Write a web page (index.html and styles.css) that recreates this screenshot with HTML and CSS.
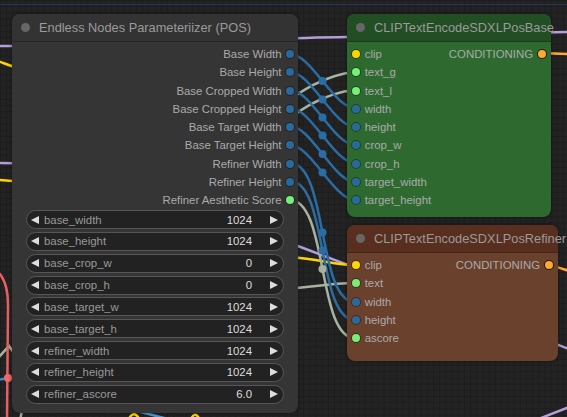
FILE: index.html
```html
<!DOCTYPE html>
<html>
<head>
<meta charset="utf-8">
<link rel="stylesheet" href="styles.css">
</head>
<body>
<div class="canvas">
  <svg class="wires" width="567" height="417" viewBox="0 0 567 417">
    <line x1="0" y1="4.5" x2="567" y2="4.5" stroke="#22345e" stroke-width="1"/>
    <g fill="none" stroke-width="2.5" stroke-linecap="round">
      <path d="M -2 46 C 120 46, 220 39, 347 37 L 569 32" stroke="#b39ddb"/>
      <path d="M -2 163 C 120 163, 180 205, 290 243 L 569 349" stroke="#b39ddb"/>
      <path d="M 536 420 L 569 407" stroke="#b39ddb"/>
      <path d="M -2 61 C 6 64, 12 67, 30 72" stroke="#ffd500"/>
      <path d="M -2 180 C 120 185, 200 252, 290 257 C 320 259, 335 265, 355 265" stroke="#ffd500"/>
      <path d="M 128 421 C 131 413, 136 411, 140 421" stroke="#ffd500"/>
      <path d="M 190 421 C 193 414, 196 412, 200 420" stroke="#ffd500"/>
      <path d="M 541 53 L 569 54" stroke="#ffa931"/>
      <path d="M 548 265 C 555 266, 560 268, 569 271" stroke="#ffa931"/>
      <path d="M 230 140 C 280 110, 310 76, 355 72" stroke="#a6b3a0"/>
      <path d="M 230 160 C 280 128, 310 94, 355 90" stroke="#a6b3a0"/>
      <path d="M 250 292 C 300 289, 330 283, 355 283" stroke="#a6b3a0"/>
      <path d="M -2 358 L 9 346 L 14 353" stroke="#a6b3a0"/>
      <path d="M 22 410 L 20 421" stroke="#a6b3a0"/>
      <path d="M 290 200 C 328 200, 317 338, 355 338" stroke="#a6b3a0"/>
      <path d="M 290 54 C 311 54, 334 108, 355 108" stroke="#2b6ca3"/>
      <path d="M 290 72 C 311 72, 334 127, 355 127" stroke="#2b6ca3"/>
      <path d="M 290 90 C 311 90, 334 145, 355 145" stroke="#2b6ca3"/>
      <path d="M 290 108 C 311 108, 334 163, 355 163" stroke="#2b6ca3"/>
      <path d="M 290 126 C 311 126, 334 182, 355 182" stroke="#2b6ca3"/>
      <path d="M 290 145 C 311 145, 334 200, 355 200" stroke="#2b6ca3"/>
      <path d="M 290 163 C 328 163, 317 302, 355 302" stroke="#2b6ca3"/>
      <path d="M 290 181 C 328 181, 317 320, 355 320" stroke="#2b6ca3"/>
      <path d="M -2 272 C 6 280, 8 292, 8 305 L 7 421" stroke="#e86060"/>
      <path d="M -2 380 L 8 378" stroke="#3b8ad0"/>
      <path d="M 137 411 L 168 419" stroke="#4a9ad8"/>
    </g>
    <g fill="#2b6ca3">
      <circle cx="322.5" cy="81" r="4"/>
      <circle cx="322.5" cy="99.5" r="4"/>
      <circle cx="322.5" cy="117.5" r="4"/>
      <circle cx="322.5" cy="135.5" r="4"/>
      <circle cx="322.5" cy="154" r="4"/>
      <circle cx="322.5" cy="172.5" r="4"/>
      <circle cx="322.5" cy="232.5" r="4"/>
      <circle cx="322.5" cy="250.5" r="4"/>
    </g>
    <circle cx="322.5" cy="269" r="4" fill="#a6b3a0"/>
    <circle cx="8" cy="378" r="4" fill="#f06a6a"/>
  </svg>

  <div class="node node-params">
    <div class="node-header"><span class="node-dot"></span><span class="node-title">Endless Nodes Parameteriizer (POS)</span></div>
    <div class="node-body">
      <div class="slot out"><span class="label">Base Width</span><span class="dot int"></span></div>
      <div class="slot out"><span class="label">Base Height</span><span class="dot int"></span></div>
      <div class="slot out"><span class="label">Base Cropped Width</span><span class="dot int"></span></div>
      <div class="slot out"><span class="label">Base Cropped Height</span><span class="dot int"></span></div>
      <div class="slot out"><span class="label">Base Target Width</span><span class="dot int"></span></div>
      <div class="slot out"><span class="label">Base Target Height</span><span class="dot int"></span></div>
      <div class="slot out"><span class="label">Refiner Width</span><span class="dot int"></span></div>
      <div class="slot out"><span class="label">Refiner Height</span><span class="dot int"></span></div>
      <div class="slot out"><span class="label">Refiner Aesthetic Score</span><span class="dot float"></span></div>
      <div class="widgets">
        <div class="widget"><span class="arrow left"></span><span class="w-label">base_width</span><span class="w-value">1024</span><span class="arrow right"></span></div>
        <div class="widget"><span class="arrow left"></span><span class="w-label">base_height</span><span class="w-value">1024</span><span class="arrow right"></span></div>
        <div class="widget"><span class="arrow left"></span><span class="w-label">base_crop_w</span><span class="w-value">0</span><span class="arrow right"></span></div>
        <div class="widget"><span class="arrow left"></span><span class="w-label">base_crop_h</span><span class="w-value">0</span><span class="arrow right"></span></div>
        <div class="widget"><span class="arrow left"></span><span class="w-label">base_target_w</span><span class="w-value">1024</span><span class="arrow right"></span></div>
        <div class="widget"><span class="arrow left"></span><span class="w-label">base_target_h</span><span class="w-value">1024</span><span class="arrow right"></span></div>
        <div class="widget"><span class="arrow left"></span><span class="w-label">refiner_width</span><span class="w-value">1024</span><span class="arrow right"></span></div>
        <div class="widget"><span class="arrow left"></span><span class="w-label">refiner_height</span><span class="w-value">1024</span><span class="arrow right"></span></div>
        <div class="widget"><span class="arrow left"></span><span class="w-label">refiner_ascore</span><span class="w-value">6.0</span><span class="arrow right"></span></div>
      </div>
    </div>
  </div>

  <div class="node node-green">
    <div class="node-header"><span class="node-dot"></span><span class="node-title">CLIPTextEncodeSDXLPosBase</span></div>
    <div class="node-body">
      <div class="row">
        <div class="slot in"><span class="dot clip"></span><span class="label">clip</span></div>
        <div class="slot out"><span class="label">CONDITIONING</span><span class="dot cond"></span></div>
      </div>
      <div class="slot in"><span class="dot float"></span><span class="label">text_g</span></div>
      <div class="slot in"><span class="dot float"></span><span class="label">text_l</span></div>
      <div class="slot in"><span class="dot int"></span><span class="label">width</span></div>
      <div class="slot in"><span class="dot int"></span><span class="label">height</span></div>
      <div class="slot in"><span class="dot int"></span><span class="label">crop_w</span></div>
      <div class="slot in"><span class="dot int"></span><span class="label">crop_h</span></div>
      <div class="slot in"><span class="dot int"></span><span class="label">target_width</span></div>
      <div class="slot in"><span class="dot int"></span><span class="label">target_height</span></div>
    </div>
  </div>

  <div class="node node-brown">
    <div class="node-header"><span class="node-dot"></span><span class="node-title">CLIPTextEncodeSDXLPosRefiner</span></div>
    <div class="node-body">
      <div class="row">
        <div class="slot in"><span class="dot clip"></span><span class="label">clip</span></div>
        <div class="slot out"><span class="label">CONDITIONING</span><span class="dot cond"></span></div>
      </div>
      <div class="slot in"><span class="dot float"></span><span class="label">text</span></div>
      <div class="slot in"><span class="dot int"></span><span class="label">width</span></div>
      <div class="slot in"><span class="dot int"></span><span class="label">height</span></div>
      <div class="slot in"><span class="dot float"></span><span class="label">ascore</span></div>
    </div>
  </div>
</div>
</body>
</html>
```

FILE: styles.css
```css
html, body {
  margin: 0;
  padding: 0;
  background: #222;
}

body {
  font-family: "Liberation Sans", Arial, sans-serif;
  width: 567px;
  height: 417px;
  overflow: hidden;
}

.canvas {
  position: relative;
  width: 567px;
  height: 417px;
  background-color: #232323;
  background-image:
    linear-gradient(#1d1d1d 1px, transparent 1px),
    linear-gradient(90deg, #1d1d1d 1px, transparent 1px);
  background-size: 6.2px 6.2px;
  overflow: hidden;
}

.wires {
  position: absolute;
  left: 0;
  top: 0;
}

.node {
  position: absolute;
  border-radius: 8px;
  box-shadow: 0 0 4px rgba(0, 0, 0, 0.45);
  box-sizing: border-box;
}

.node-params {
  left: 12px;
  top: 14px;
  width: 286px;
  height: 399px;
  background: #353535;
}

.node-params .node-header {
  background: #333;
}

.node-green {
  left: 347px;
  top: 14px;
  width: 204px;
  height: 203px;
  background: #2e6a30;
}

.node-green .node-header {
  background: #224e23;
}

.node-brown {
  left: 347px;
  top: 225px;
  width: 211px;
  height: 136px;
  background: #6a412d;
}

.node-brown .node-header {
  background: #582e1e;
}

.node-header {
  height: 27px;
  display: flex;
  align-items: center;
  padding-left: 9px;
  gap: 9px;
  border-radius: 8px 8px 0 0;
  border-bottom: 1px solid rgba(0, 0, 0, 0.22);
  white-space: nowrap;
}

.node-dot {
  flex: none;
  width: 9px;
  height: 9px;
  border-radius: 50%;
  background: #666;
}

.node-title {
  font-size: 12.8px;
  color: #9a9a9a;
}

.node-body {
  padding-top: 3px;
}

.row {
  display: flex;
  justify-content: space-between;
  height: 18.25px;
}

.slot {
  height: 18.25px;
  display: flex;
  align-items: center;
}

.slot.in {
  padding-left: 4.7px;
  gap: 5px;
}

.slot.out {
  justify-content: flex-end;
  padding-right: 5px;
  gap: 5px;
}

.node-params .slot.out {
  padding-right: 4.5px;
  gap: 4px;
}

.label {
  font-size: 11.4px;
  color: #aaa;
  white-space: nowrap;
}

.dot {
  flex: none;
  width: 8px;
  height: 8px;
  border-radius: 50%;
  box-shadow: 0 0 0 1px rgba(0, 0, 0, 0.35);
}

.dot.int { background: #29699c; }
.dot.float { background: #77ee77; }
.dot.clip { background: #ffd500; }
.dot.cond {
  background: #ffa931;
  box-shadow: 0 0 0 1px #1a1a1a;
}

.widgets {
  display: flex;
  flex-direction: column;
  gap: 2.85px;
  margin: 0.75px 14px 0;
}

.widget {
  height: 19px;
  box-sizing: border-box;
  border: 1px solid #565656;
  border-radius: 10px;
  background: #222;
  display: flex;
  align-items: center;
  padding: 0 5px 0 4px;
  font-size: 11.4px;
}

.arrow {
  flex: none;
  width: 0;
  height: 0;
  border-top: 4px solid transparent;
  border-bottom: 4px solid transparent;
}

.arrow.left {
  border-right: 8px solid #ddd;
}

.arrow.right {
  border-left: 8px solid #ddd;
  margin-left: 18px;
}

.w-label {
  margin-left: 5px;
  color: #999;
}

.w-value {
  flex: 1;
  text-align: right;
  color: #ddd;
}
```
